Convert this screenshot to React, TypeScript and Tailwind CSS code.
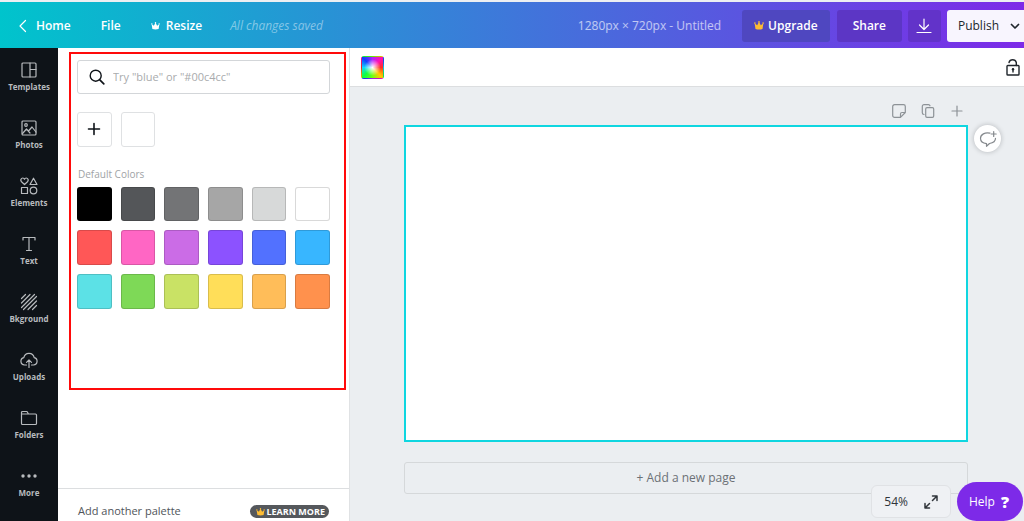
import React from "react";

type IconProps = { className?: string; children: React.ReactNode; box?: string };

function Icon({ className = "", children, box = "0 0 18 18" }: IconProps) {
  return (
    <svg
      viewBox={box}
      fill="none"
      stroke="currentColor"
      strokeWidth="1.2"
      strokeLinecap="round"
      strokeLinejoin="round"
      aria-hidden="true"
      className={"shrink-0 " + className}
    >
      {children}
    </svg>
  );
}

function Crown({ className = "" }: { className?: string }) {
  return (
    <svg viewBox="0 0 10 9" fill="currentColor" aria-hidden="true" className={"shrink-0 " + className}>
      <path d="M0.6 2.2 3.2 4.3 5 0.7 6.800 4.3 9.4 2.2 8.5 7.9Q5 9 1.5 7.9Z" />
      <circle cx="0.9" cy="2.1" r="0.8" />
      <circle cx="5" cy="0.9" r="0.8" />
      <circle cx="9.1" cy="2.1" r="0.8" />
    </svg>
  );
}

const navItems: { label: string; icon: React.ReactNode }[] = [
  {
    label: "Templates",
    icon: (
      <>
        <rect x="2" y="2" width="14" height="14" rx="1" />
        <path d="M10 2v14M10 8.5h6" />
      </>
    ),
  },
  {
    label: "Photos",
    icon: (
      <>
        <rect x="2" y="2" width="14" height="14" rx="1" />
        <circle cx="6" cy="6" r="1.3" />
        <path d="m2.5 14.5 4-4.5 3.5 4M8.5 12l3.5-4 4 5" />
      </>
    ),
  },
  {
    label: "Elements",
    icon: (
      <>
        <path d="M4.500 7.500 1.500 4.700C0 3 1.300 1 2.800 1 3.800 1 4.300 1.700 4.500 2.200 4.700 1.700 5.200 1 6.200 1 7.700 1 9 3 7.500 4.700Z" />
        <path d="m13.500 1.200 3.500 6.300h-7Z" />
        <rect x="1.500" y="10.500" width="6" height="6" />
        <circle cx="13.500" cy="13.500" r="3.300" />
      </>
    ),
  },
  {
    label: "Text",
    icon: <path d="M3 5V2.500h12V5M9 2.500v13M6.500 15.500h5" />,
  },
  {
    label: "Bkground",
    icon: <path d="M1.500 5.500l4-4M1.500 10l8.500-8.500M1.500 14.500l13-13M3.500 16.500l13-13M8 16.500l8.500-8.500M12.500 16.500l4-4" />,
  },
  {
    label: "Uploads",
    icon: (
      <>
        <path d="M6.500 14H4.500A3.700 3.700 0 0 1 3.800 6.700 5.300 5.300 0 0 1 14.200 6.700 3.700 3.700 0 0 1 13.500 14h-2" />
        <path d="M9 16.500V9M6.500 11.300 9 8.800l2.500 2.500" />
      </>
    ),
  },
  {
    label: "Folders",
    icon: <path d="M1.500 3.500a1 1 0 0 1 1-1H7L8.500 5h7a1 1 0 0 1 1 1v8.500a1 1 0 0 1-1 1h-13a1 1 0 0 1-1-1ZM1.500 5h7" />,
  },
  {
    label: "More",
    icon: (
      <g fill="currentColor" stroke="none">
        <circle cx="3" cy="9" r="1.700" />
        <circle cx="9" cy="9" r="1.700" />
        <circle cx="15" cy="9" r="1.700" />
      </g>
    ),
  },
];

const defaultColors = [
  { name: "Black", bg: "bg-black" },
  { name: "Dark gray", bg: "bg-[#545659]" },
  { name: "Gray", bg: "bg-[#737476]" },
  { name: "Medium gray", bg: "bg-[#a6a6a6]" },
  { name: "Light gray", bg: "bg-[#d7d9d9]" },
  { name: "White", bg: "bg-white" },
  { name: "Red", bg: "bg-[#ff5757]" },
  { name: "Pink", bg: "bg-[#ff66c4]" },
  { name: "Orchid", bg: "bg-[#cb6ce6]" },
  { name: "Violet", bg: "bg-[#8c52ff]" },
  { name: "Blue", bg: "bg-[#5271ff]" },
  { name: "Sky blue", bg: "bg-[#38b6ff]" },
  { name: "Aqua", bg: "bg-[#5ce1e6]" },
  { name: "Green", bg: "bg-[#7ed957]" },
  { name: "Lime", bg: "bg-[#c9e265]" },
  { name: "Yellow", bg: "bg-[#ffde59]" },
  { name: "Peach", bg: "bg-[#ffbd59]" },
  { name: "Orange", bg: "bg-[#ff914d]" },
];

function Header() {
  return (
    <header className="mt-0.5 flex h-[46px] shrink-0 items-center bg-[linear-gradient(90deg,#00c4cc,#7d2ae8)] pt-px text-xs font-semibold text-white">
      <a href="#home" className="flex items-center gap-2 pl-[18px]">
        <Icon box="0 0 10 14" className="h-3.5 w-2.5">
          <path d="M7.500 1.500 2 7l5.500 5.500" />
        </Icon>
        Home
      </a>
      <button className="ml-[30px]">File</button>
      <button className="ml-[30px] flex items-center gap-1.5">
        <Crown className="h-2 w-[9px]" />
        Resize
      </button>
      <span className="ml-7 font-normal italic text-white/45">All changes saved</span>
      <span className="ml-auto font-medium text-white/65">1280px × 720px - Untitled</span>
      <button className="ml-[21px] flex h-8 items-center gap-1 rounded-[3px] bg-[#4f47c0] px-3">
        <Crown className="h-[9px] w-2.5 text-[#fdbc33]" />
        Upgrade
      </button>
      <button className="ml-[7px] h-8 rounded-[3px] bg-[#5c36c5] px-4">Share</button>
      <button aria-label="Download" className="ml-1.5 flex h-8 w-[33px] items-center justify-center rounded-[3px] bg-[#6233c9]">
        <Icon box="0 0 16 16" className="size-4">
          <path d="M8 1v10.500M3.500 7 8 11.500 12.500 7M1 14.500h14" />
        </Icon>
      </button>
      <button className="ml-1.5 flex h-8 items-center gap-[11px] rounded-l-[3px] bg-[#f8f5fe] pl-[11px] pr-1 font-medium text-[#20262c]">
        Publish
        <Icon box="0 0 10 10" className="size-2.5">
          <path d="m1.500 3.500 3.500 3.500 3.500-3.500" strokeWidth="1.700" />
        </Icon>
      </button>
    </header>
  );
}

function Sidebar() {
  return (
    <nav className="w-[58px] shrink-0 bg-[#0e1318] pt-px text-[#b8bbbe]">
      {navItems.map((item) => (
        <button key={item.label} className="flex h-[58px] w-full flex-col items-center gap-0.5 pt-3">
          <Icon className="size-[18px]">{item.icon}</Icon>
          <span className="text-[8px] leading-3 font-bold">{item.label}</span>
        </button>
      ))}
    </nav>
  );
}

function ColorPanel() {
  return (
    <aside className="flex w-[291px] shrink-0 flex-col bg-white">
      <section className="mt-1 mr-[3px] ml-[11px] h-[338px] border-2 border-[#ff0a0a] pt-1.5 pr-3.5 pl-1.5">
        <label className="flex h-[34px] items-center gap-2 rounded-[3px] border border-[#d3d6d9] pl-[11px]">
          <Icon box="0 0 16 16" className="size-4 text-[#0e1318]">
            <circle cx="6.700" cy="6.700" r="5.500" strokeWidth="1.400" />
            <path d="m10.800 10.800 4 4" strokeWidth="1.700" />
          </Icon>
          <input
            type="text"
            aria-label="Search colors"
            placeholder={'Try "blue" or "#00c4cc"'}
            className="min-w-0 flex-1 bg-transparent text-[11px] text-[#0e1318] outline-none placeholder:text-[#a9abad]"
          />
        </label>
        <div className="mt-[18px] grid grid-cols-6 gap-[9px]">
          <button aria-label="Add color" className="flex aspect-square items-center justify-center rounded-[3px] border border-[#dfe1e3] text-[#0e1318]">
            <Icon box="0 0 14 14" className="size-3.5">
              <path d="M7 1.500v11M1.500 7h11" strokeWidth="1.600" />
            </Icon>
          </button>
          <button aria-label="White, document color" className="aspect-square rounded-[3px] border border-[#dfe1e3] bg-white" />
        </div>
        <h2 className="mt-[19px] pl-px text-[10px] leading-4 font-medium text-[#a0a3a6]">Default Colors</h2>
        <div className="mt-[5px] grid grid-cols-6 gap-[9px]">
          {defaultColors.map((color) => (
            <button key={color.name} aria-label={color.name} className={"aspect-square rounded-[3px] border border-black/15 " + color.bg} />
          ))}
        </div>
      </section>
      <footer className="mt-auto flex h-[33px] items-start justify-between border-t border-[#dcdee0] pt-3.5 pr-5 pl-5">
        <span className="text-[11px] leading-4 text-[#50555a]">Add another palette</span>
        <a href="#learn-more" className="mt-0.5 flex h-[13px] items-center gap-px rounded-full bg-[#55585c] pr-1 pl-1.5 text-[9px] font-bold text-white">
          <Crown className="h-2 w-[9px] text-[#fdbc33]" />
          LEARN MORE
        </a>
      </footer>
    </aside>
  );
}

function Toolbar() {
  return (
    <div className="flex h-[39px] shrink-0 items-center justify-between border-b border-[#dcdee0] bg-white pr-1 pl-[11px]">
      <button
        aria-label="Background color"
        className="size-[23px] rounded-[3px] border border-black/10 bg-[radial-gradient(circle,white_0%,transparent_55%),conic-gradient(from_0deg,#b020ff,#ff10b0_45deg,#ff3020_90deg,#ffc800_135deg,#70ff10_180deg,#10ff40_225deg,#10d8ff_270deg,#1040ff_315deg,#b020ff)]"
      />
      <button aria-label="Lock" className="text-[#20262c]">
        <Icon box="0 0 14 18" className="h-[18px] w-3.5">
          <path d="M3 4.500a3.800 3.800 0 0 1 7.300 0V7.500" strokeWidth="1.400" />
          <rect x="1" y="7.500" width="12" height="9.500" rx="0.800" strokeWidth="1.400" />
          <circle cx="7" cy="11.300" r="1.200" fill="currentColor" stroke="none" />
          <path d="M7 11v3" strokeWidth="1.400" />
        </Icon>
      </button>
    </div>
  );
}

function Workspace() {
  return (
    <main className="relative flex min-w-0 flex-1 flex-col border-l border-[#e0e2e4] bg-[#ebeef1]">
      <Toolbar />
      <div className="mr-14 flex h-[38px] shrink-0 items-center justify-end gap-[15px] pt-[9px] pr-1 text-[#8d9297]">
        <button aria-label="Add notes">
          <Icon box="0 0 14 14" className="size-3.5">
            <path d="M2.500.7h9a1.800 1.800 0 0 1 1.800 1.800v6L8.500 13.300h-6a1.800 1.800 0 0 1-1.800-1.800v-9A1.800 1.800 0 0 1 2.500.7ZM8.500 13V10a1.500 1.500 0 0 1 1.500-1.500h3" />
          </Icon>
        </button>
        <button aria-label="Duplicate page">
          <Icon box="0 0 14 14" className="size-3.5">
            <rect x="4.700" y="3.700" width="8" height="9.600" rx="1.300" />
            <path d="M3 10.500A1.700 1.700 0 0 1 1.300 8.800V2.400A1.700 1.700 0 0 1 3 .7h4.500A1.700 1.700 0 0 1 9 1.800" />
          </Icon>
        </button>
        <button aria-label="Add page">
          <Icon box="0 0 14 14" className="size-3.5">
            <path d="M7 2v10M2 7h10" />
          </Icon>
        </button>
      </div>
      <div className="flex shrink-0 items-start pl-[54px]">
        <div className="aspect-video min-w-0 flex-1 border-2 border-[#0fd6e0] bg-white" />
        <div className="w-14 pl-1.5">
          <button aria-label="Add comment" className="flex size-[27px] items-center justify-center rounded-full bg-white text-[#85898d] shadow-[0_0_5px_rgba(14,19,24,0.25)]">
            <Icon box="0 0 18 18" className="size-[18px]">
              <path d="M11 3.200C6 2 1.500 4.500 1.500 8.300c0 3 2.700 5 6 5.300v2.700l3-2.800c3.500-.5 6-2.500 6-5.200" />
              <path d="M14.700 1.500v5M12.200 4h5" />
            </Icon>
          </button>
        </div>
      </div>
      <button className="mt-5 mr-14 ml-[54px] h-8 shrink-0 rounded-[3px] border border-[#d5d8da] text-xs text-[#6c7176]">
        + Add a new page
      </button>
      <div className="absolute right-[73px] bottom-[3px] flex h-[33px] items-center gap-4 rounded-md border border-[#e0e2e5] bg-[#eff1f4] px-3 text-xs text-[#30353a]">
        <button>54%</button>
        <button aria-label="Full screen">
          <Icon box="0 0 14 14" className="size-3.5">
            <path d="M8.500 1H13v4.500M13 1 8.500 5.500M1 8.500V13h4.500M1 13l4.500-4.500" strokeWidth="1.500" />
          </Icon>
        </button>
      </div>
      <button className="absolute right-px bottom-0 flex h-[39px] items-center gap-1.5 rounded-full bg-[#7d2ae8] pr-3.5 pl-3 text-xs font-medium text-white">
        Help
        <span className="text-base font-extrabold">?</span>
      </button>
    </main>
  );
}

export default function App() {
  return (
    <div className="flex h-screen flex-col overflow-hidden bg-[#eceff2] font-['Open_Sans','Noto_Sans',sans-serif]">
      <Header />
      <div className="flex min-h-0 flex-1">
        <Sidebar />
        <ColorPanel />
        <Workspace />
      </div>
    </div>
  );
}
